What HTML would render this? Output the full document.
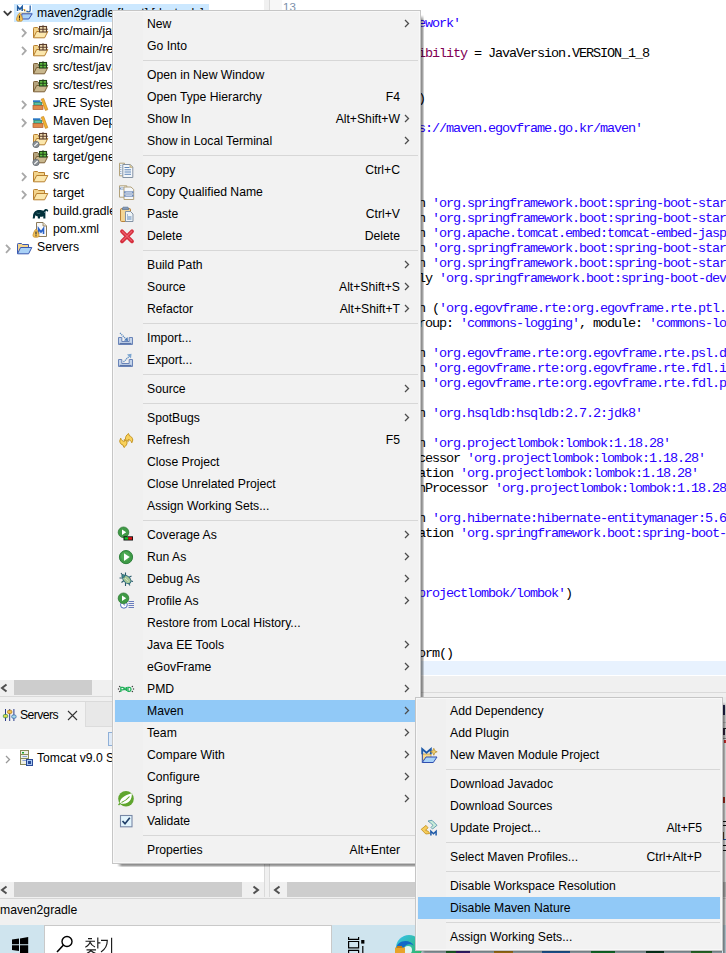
<!DOCTYPE html><html><head><meta charset="utf-8"><style>
*{margin:0;padding:0;box-sizing:content-box}
html,body{width:726px;height:953px;overflow:hidden;background:#fff;position:relative}
.ab{position:absolute}
.t{font-family:"Liberation Sans", sans-serif;font-size:12.2px;color:#000;white-space:nowrap}
.c{font-family:"Liberation Mono",monospace;font-size:13.5px;letter-spacing:-1.1px;white-space:pre;color:#000;line-height:15px}
.s{color:#2a00ff}
.k{color:#7f0055}
</style></head><body>
<div class="ab" style="left:264px;top:0;width:5px;height:697px;background:#f0f0f0"></div>
<div class="ab" style="left:269px;top:0;width:1px;height:692px;background:#dadada"></div>
<div class="ab" style="left:270px;top:0;width:12px;height:692px;background:#f7f7f7"></div>
<div class="ab t" style="left:283px;top:-4px;height:22px;line-height:22px;color:#7a8ea8;font-size:11.5px">13</div>
<div class="ab" style="left:14px;top:4px;width:195px;height:18px;background:#cce8ff"></div>
<svg class="ab" style="left:2px;top:9px" width="11" height="9" viewBox="0 0 11 9"><path d="M1.8 2.2 L5.6 6 L9.4 2.2" fill="none" stroke="#3c3c3c" stroke-width="1.8"/></svg>
<div class="ab" style="left:16px;top:5px;line-height:0"><svg width="17" height="17" viewBox="0 0 17 17"><rect x="0.5" y="0" width="15.5" height="7" fill="#fff"/><path d="M1.6 6V1.5L3.9 4.3L6.2 1.5V6" fill="none" stroke="#1f5a9e" stroke-width="1.5"/><path d="M7.5 4.5h1.5v2" stroke="#d9a83a" stroke-width="1"/><path d="M14.2 0.5V5.2Q14.2 7 12.5 7Q11 7 10.6 5.8" fill="none" stroke="#2a62a8" stroke-width="1.3"/><path d="M3 7.5H14V9H3z" fill="#f6dc98"/><path d="M5.8 8.8H16.2L12.8 14H5.8Z" fill="#a9d1f6" stroke="#3a52b0" stroke-width="1" stroke-linejoin="round"/><path d="M3.5 8.3C2.5 8.3 0.5 12.8 0.5 14.5C0.5 16 1.5 16.2 3.5 16.2C5.5 16.2 6.5 16 6.5 14.5C6.5 12.8 4.5 8.3 3.5 8.3Z" fill="#f6c558" stroke="#c68a2a" stroke-width="0.8"/><path d="M3.5 10.6V13.4M3.5 14.2V15.2" stroke="#2a2a2a" stroke-width="1.1"/></svg></div>
<div class="ab t" style="left:37px;top:2px;height:22px;line-height:22px">maven2gradle [boot] [devtools]</div>
<svg class="ab" style="left:20px;top:27px" width="9" height="12" viewBox="0 0 9 12"><path d="M2 1.8 L5.8 5.8 L2 9.8" fill="none" stroke="#a8a8a8" stroke-width="1.8"/></svg>
<div class="ab" style="left:32px;top:23px;line-height:0"><svg width="17" height="17" viewBox="0 0 17 17"><g transform="translate(0,1)"><path d="M1.5 13.5V4.3Q1.5 3.5 2.3 3.5H5.5L6.5 4.5H12.5V7.5" fill="#f3d48c" stroke="#b8802f" stroke-width="1"/><path d="M1.5 13.8L4.6 7.5H15.8L12.6 13.8Z" fill="#fbe7ad" stroke="#b8802f" stroke-width="1" stroke-linejoin="round"/><rect x="7.5" y="2.5" width="7" height="5.5" fill="#f6e2b4" stroke="#5c3e2c" stroke-width="1.1"/><path d="M11 1.2V8M6.5 5.2H15.8" stroke="#5c3e2c" stroke-width="1.1"/></g></svg></div>
<div class="ab t" style="left:53px;top:20px;height:22px;line-height:22px">src/main/java</div>
<svg class="ab" style="left:20px;top:45px" width="9" height="12" viewBox="0 0 9 12"><path d="M2 1.8 L5.8 5.8 L2 9.8" fill="none" stroke="#a8a8a8" stroke-width="1.8"/></svg>
<div class="ab" style="left:32px;top:41px;line-height:0"><svg width="17" height="17" viewBox="0 0 17 17"><g transform="translate(0,1)"><path d="M1.5 13.5V4.3Q1.5 3.5 2.3 3.5H5.5L6.5 4.5H12.5V7.5" fill="#f3d48c" stroke="#b8802f" stroke-width="1"/><path d="M1.5 13.8L4.6 7.5H15.8L12.6 13.8Z" fill="#fbe7ad" stroke="#b8802f" stroke-width="1" stroke-linejoin="round"/><rect x="7.5" y="2.5" width="7" height="5.5" fill="#f6e2b4" stroke="#5c3e2c" stroke-width="1.1"/><path d="M11 1.2V8M6.5 5.2H15.8" stroke="#5c3e2c" stroke-width="1.1"/></g></svg></div>
<div class="ab t" style="left:53px;top:38px;height:22px;line-height:22px">src/main/resources</div>
<div class="ab" style="left:32px;top:59px;line-height:0"><svg width="17" height="17" viewBox="0 0 17 17"><g transform="translate(0,1)"><path d="M1.5 13.5V4.3Q1.5 3.5 2.3 3.5H5.5L6.5 4.5H12.5V7.5" fill="#b5a47e" stroke="#7c6038" stroke-width="1"/><path d="M1.5 13.8L4.6 7.5H15.8L12.6 13.8Z" fill="#c9b88e" stroke="#7c6038" stroke-width="1" stroke-linejoin="round"/><rect x="7.5" y="2.5" width="7" height="5.5" fill="#62c043" stroke="#21421a" stroke-width="1.1"/><path d="M11 1.2V8M6.5 5.2H15.8" stroke="#21421a" stroke-width="1.1"/></g></svg></div>
<div class="ab t" style="left:53px;top:56px;height:22px;line-height:22px">src/test/java</div>
<div class="ab" style="left:32px;top:77px;line-height:0"><svg width="17" height="17" viewBox="0 0 17 17"><g transform="translate(0,1)"><path d="M1.5 13.5V4.3Q1.5 3.5 2.3 3.5H5.5L6.5 4.5H12.5V7.5" fill="#b5a47e" stroke="#7c6038" stroke-width="1"/><path d="M1.5 13.8L4.6 7.5H15.8L12.6 13.8Z" fill="#c9b88e" stroke="#7c6038" stroke-width="1" stroke-linejoin="round"/><rect x="7.5" y="2.5" width="7" height="5.5" fill="#62c043" stroke="#21421a" stroke-width="1.1"/><path d="M11 1.2V8M6.5 5.2H15.8" stroke="#21421a" stroke-width="1.1"/></g></svg></div>
<div class="ab t" style="left:53px;top:74px;height:22px;line-height:22px">src/test/resources</div>
<svg class="ab" style="left:20px;top:99px" width="9" height="12" viewBox="0 0 9 12"><path d="M2 1.8 L5.8 5.8 L2 9.8" fill="none" stroke="#a8a8a8" stroke-width="1.8"/></svg>
<div class="ab" style="left:32px;top:95px;line-height:0"><svg width="17" height="17" viewBox="0 0 17 17"><rect x="1" y="5.3" width="7.5" height="1.8" fill="#2b78c2"/><rect x="1.8" y="7.3" width="8" height="3" fill="#3aa98a" stroke="#2a7a62" stroke-width="0.6"/><path d="M3 8.8h5.5" stroke="#8fd8c0" stroke-width="0.7"/><rect x="1" y="10.5" width="10" height="4" fill="#e0894a" stroke="#b05a2a" stroke-width="0.7"/><path d="M9.2 4.2L11.6 3.4L15.8 14.6L13.4 15.4Z" fill="#f2b431" stroke="#c68220" stroke-width="0.7"/></svg></div>
<div class="ab t" style="left:53px;top:92px;height:22px;line-height:22px">JRE System Library [JavaSE-1.8]</div>
<svg class="ab" style="left:20px;top:117px" width="9" height="12" viewBox="0 0 9 12"><path d="M2 1.8 L5.8 5.8 L2 9.8" fill="none" stroke="#a8a8a8" stroke-width="1.8"/></svg>
<div class="ab" style="left:32px;top:113px;line-height:0"><svg width="17" height="17" viewBox="0 0 17 17"><rect x="1" y="5.3" width="7.5" height="1.8" fill="#2b78c2"/><rect x="1.8" y="7.3" width="8" height="3" fill="#3aa98a" stroke="#2a7a62" stroke-width="0.6"/><path d="M3 8.8h5.5" stroke="#8fd8c0" stroke-width="0.7"/><rect x="1" y="10.5" width="10" height="4" fill="#e0894a" stroke="#b05a2a" stroke-width="0.7"/><path d="M9.2 4.2L11.6 3.4L15.8 14.6L13.4 15.4Z" fill="#f2b431" stroke="#c68220" stroke-width="0.7"/></svg></div>
<div class="ab t" style="left:53px;top:110px;height:22px;line-height:22px">Maven Dependencies</div>
<div class="ab" style="left:32px;top:131px;line-height:0"><svg width="17" height="17" viewBox="0 0 17 17"><g transform="translate(0,0)"><path d="M1.5 13.5V4.3Q1.5 3.5 2.3 3.5H5.5L6.5 4.5H12.5V7.5" fill="#f3d48c" stroke="#b8802f" stroke-width="1"/><path d="M1.5 13.8L4.6 7.5H15.8L12.6 13.8Z" fill="#fbe7ad" stroke="#b8802f" stroke-width="1" stroke-linejoin="round"/><rect x="7.5" y="2.5" width="7" height="5.5" fill="#f6e2b4" stroke="#5c3e2c" stroke-width="1.1"/><path d="M11 1.2V8M6.5 5.2H15.8" stroke="#5c3e2c" stroke-width="1.1"/></g><circle cx="4" cy="13.5" r="3.2" fill="#8a9096" stroke="#6a7076" stroke-width="0.8"/><path d="M2.3 15.2L5.7 11.8" stroke="#fff" stroke-width="1.1"/></svg></div>
<div class="ab t" style="left:53px;top:128px;height:22px;line-height:22px">target/generated-sources/annotations</div>
<div class="ab" style="left:32px;top:149px;line-height:0"><svg width="17" height="17" viewBox="0 0 17 17"><g transform="translate(0,0)"><path d="M1.5 13.5V4.3Q1.5 3.5 2.3 3.5H5.5L6.5 4.5H12.5V7.5" fill="#b5a47e" stroke="#7c6038" stroke-width="1"/><path d="M1.5 13.8L4.6 7.5H15.8L12.6 13.8Z" fill="#c9b88e" stroke="#7c6038" stroke-width="1" stroke-linejoin="round"/><rect x="7.5" y="2.5" width="7" height="5.5" fill="#62c043" stroke="#21421a" stroke-width="1.1"/><path d="M11 1.2V8M6.5 5.2H15.8" stroke="#21421a" stroke-width="1.1"/></g><circle cx="4" cy="13.5" r="3.2" fill="#8a9096" stroke="#6a7076" stroke-width="0.8"/><path d="M2.3 15.2L5.7 11.8" stroke="#fff" stroke-width="1.1"/></svg></div>
<div class="ab t" style="left:53px;top:146px;height:22px;line-height:22px">target/generated-test-sources/test-annotations</div>
<svg class="ab" style="left:20px;top:171px" width="9" height="12" viewBox="0 0 9 12"><path d="M2 1.8 L5.8 5.8 L2 9.8" fill="none" stroke="#a8a8a8" stroke-width="1.8"/></svg>
<div class="ab" style="left:32px;top:167px;line-height:0"><svg width="17" height="17" viewBox="0 0 17 17"><g transform="translate(0,1)"><path d="M1.5 13.5V4.3Q1.5 3.5 2.3 3.5H5.5L6.5 4.5H12.5V7.5" fill="#f3d48c" stroke="#b8802f" stroke-width="1"/><path d="M1.5 13.8L4.6 7.5H15.8L12.6 13.8Z" fill="#fbe7ad" stroke="#b8802f" stroke-width="1" stroke-linejoin="round"/></g></svg></div>
<div class="ab t" style="left:53px;top:164px;height:22px;line-height:22px">src</div>
<svg class="ab" style="left:20px;top:189px" width="9" height="12" viewBox="0 0 9 12"><path d="M2 1.8 L5.8 5.8 L2 9.8" fill="none" stroke="#a8a8a8" stroke-width="1.8"/></svg>
<div class="ab" style="left:32px;top:185px;line-height:0"><svg width="17" height="17" viewBox="0 0 17 17"><g transform="translate(0,1)"><path d="M1.5 13.5V4.3Q1.5 3.5 2.3 3.5H5.5L6.5 4.5H12.5V7.5" fill="#f3d48c" stroke="#b8802f" stroke-width="1"/><path d="M1.5 13.8L4.6 7.5H15.8L12.6 13.8Z" fill="#fbe7ad" stroke="#b8802f" stroke-width="1" stroke-linejoin="round"/></g></svg></div>
<div class="ab t" style="left:53px;top:182px;height:22px;line-height:22px">target</div>
<div class="ab" style="left:32px;top:203px;line-height:0"><svg width="17" height="17" viewBox="0 0 17 17"><path d="M1 13.5C1 9.5 3.5 7 7 7C9 7 10.5 7.3 11.5 7.8C12.5 6 14.5 5.5 15.8 6.8C16.5 7.5 16.2 8.8 15.3 8.6C14.8 8.5 14.8 7.8 14.2 7.8C13.5 7.9 13.4 9 13.4 10.5V15.5H11.3V13.2C10.4 13.6 9.3 13.8 8 13.7V15.5H5.8V13.4C4.8 13.2 4 12.8 3.4 12.3L2.7 15.5H0.7Z" fill="#02303a"/><path d="M4.5 9.8Q6 11 8.2 10.2" fill="none" stroke="#5a8a92" stroke-width="0.6"/><circle cx="12.6" cy="9.3" r="0.5" fill="#8ab"/></svg></div>
<div class="ab t" style="left:53px;top:200px;height:22px;line-height:22px">build.gradle</div>
<div class="ab" style="left:32px;top:221px;line-height:0"><svg width="17" height="17" viewBox="0 0 17 17"><path d="M4.5 1.5H11L14.5 5V15.5H4.5Z" fill="#f8f8f8" stroke="#8a7a5a" stroke-width="1"/><path d="M11 1.5V5H14.5" fill="#e8e0c8" stroke="#8a7a5a" stroke-width="0.8"/><path d="M6.5 13V7.5L9 11L11.5 7.5V13" fill="none" stroke="#2a62c8" stroke-width="1.6"/><g transform="translate(0.5,0)"><path d="M3.5 8.3C2.5 8.3 0.5 12.8 0.5 14.5C0.5 16 1.5 16.2 3.5 16.2C5.5 16.2 6.5 16 6.5 14.5C6.5 12.8 4.5 8.3 3.5 8.3Z" fill="#f6c558" stroke="#c68a2a" stroke-width="0.8"/><path d="M3.5 10.6V13.4M3.5 14.2V15.2" stroke="#2a2a2a" stroke-width="1.1"/></g></svg></div>
<div class="ab t" style="left:53px;top:218px;height:22px;line-height:22px">pom.xml</div>
<svg class="ab" style="left:4px;top:243px" width="9" height="12" viewBox="0 0 9 12"><path d="M2 1.8 L5.8 5.8 L2 9.8" fill="none" stroke="#a8a8a8" stroke-width="1.8"/></svg>
<div class="ab" style="left:16px;top:239px;line-height:0"><svg width="17" height="17" viewBox="0 0 17 17"><g transform="translate(0,1)"><path d="M1.5 13.5V4.3Q1.5 3.5 2.3 3.5H5.5L6.5 4.5H12.5V7.5" fill="#f3d48c" stroke="#3a58b0" stroke-width="1"/><path d="M1.5 13.8L4.6 7.5H15.8L12.6 13.8Z" fill="#a9d1f6" stroke="#3a58b0" stroke-width="1" stroke-linejoin="round"/></g></svg></div>
<div class="ab t" style="left:37px;top:236px;height:22px;line-height:22px">Servers</div>
<div class="ab" style="left:0;top:680px;width:264px;height:15px;background:#f0f0f0"></div>
<svg class="ab" style="left:0px;top:683px" width="9" height="10" viewBox="0 0 9 10"><path d="M6.5 1.5 L2 5 L6.5 8.5" fill="none" stroke="#505050" stroke-width="2"/></svg>
<div class="ab" style="left:14px;top:680px;width:78px;height:15px;background:#cdcdcd"></div>
<div class="ab" style="left:0;top:695px;width:264px;height:6px;background:#f0f0f0"></div>
<div class="ab" style="left:0;top:696px;width:264px;height:1px;background:#dadada"></div>
<div class="ab" style="left:0;top:701px;width:264px;height:1px;background:#dadada"></div>
<div class="ab" style="left:0;top:702px;width:85px;height:25px;background:#f2f2f2"></div>
<div class="ab" style="left:85px;top:702px;width:178px;height:24px;background:#e8e8e8;border-left:1px solid #dcdcdc;border-bottom:1px solid #dcdcdc"></div>
<div class="ab" style="left:0;top:727px;width:264px;height:22px;background:#f2f2f2"></div>
<svg class="ab" style="left:2px;top:708px" width="16" height="14" viewBox="0 0 16 14"><path d="M3.5 1v12M7.7 1v12M11.9 1v12" stroke="#2a3a8a" stroke-width="1"/><rect x="1.3" y="6.5" width="4.4" height="3.2" rx="1.3" fill="#d8d84a" stroke="#3a8a4a" stroke-width="0.8"/><rect x="5.5" y="2.3" width="4.4" height="3.2" rx="1.3" fill="#f2c04a" stroke="#b07a1a" stroke-width="0.8"/><rect x="9.7" y="7" width="4.4" height="3.2" rx="1.3" fill="#a8dcea" stroke="#3a6aa8" stroke-width="0.8"/></svg>
<div class="ab t" style="left:20px;top:704px;height:22px;line-height:22px;letter-spacing:-0.55px">Servers</div>
<svg class="ab" style="left:67px;top:710px" width="11" height="11" viewBox="0 0 11 11"><path d="M1 1L10 10M10 1L1 10" stroke="#333" stroke-width="1.1"/></svg>
<div class="ab" style="left:108px;top:732px;width:6px;height:12px;border:1px solid #8fb0d8;background:#dfeaf7"></div>
<div class="ab" style="left:0;top:749px;width:264px;height:133px;background:#fff"></div>
<svg class="ab" style="left:5px;top:755px" width="6" height="9" viewBox="0 0 6 9"><path d="M1 1 L4.5 4.5 L1 8" fill="none" stroke="#999" stroke-width="1.3"/></svg>
<svg class="ab" style="left:19px;top:749px" width="15" height="18" viewBox="0 0 15 18"><rect x="1.5" y="1.5" width="8" height="14" fill="#eef0e4" stroke="#8a8a5a"/><path d="M2 5.5h7M2 9.5h7" stroke="#8a8a5a"/><rect x="3" y="3" width="2" height="1.5" fill="#1aa02a"/><path d="M3.5 7.5h4.5M3.5 11.5h4.5" stroke="#8aa0d8"/><rect x="7.5" y="10.5" width="6" height="6" fill="#a8c8f0" stroke="#2a4a98"/><rect x="9" y="12" width="3" height="3" fill="#2a4a98"/></svg>
<div class="ab t" style="left:37px;top:747px;height:22px;line-height:22px">Tomcat v9.0 Server at localhost</div>
<div class="ab" style="left:0;top:882px;width:264px;height:15px;background:#f0f0f0"></div>
<svg class="ab" style="left:0px;top:885px" width="9" height="10" viewBox="0 0 9 10"><path d="M6.5 1.5 L2 5 L6.5 8.5" fill="none" stroke="#505050" stroke-width="2"/></svg>
<div class="ab" style="left:14px;top:882px;width:228px;height:15px;background:#cdcdcd"></div>
<svg class="ab" style="left:252px;top:885px" width="9" height="10" viewBox="0 0 9 10"><path d="M1.5 1.5 L6 5 L1.5 8.5" fill="none" stroke="#505050" stroke-width="2"/></svg>
<div class="ab" style="left:264px;top:697px;width:5px;height:200px;background:#f0f0f0"></div>
<div class="ab" style="left:264px;top:697px;width:1px;height:200px;background:#dadada"></div>
<div class="ab" style="left:269px;top:697px;width:1px;height:200px;background:#dadada"></div>
<div class="ab" style="left:270px;top:882px;width:456px;height:15px;background:#f0f0f0"></div>
<svg class="ab" style="left:273px;top:885px" width="9" height="10" viewBox="0 0 9 10"><path d="M6.5 1.5 L2 5 L6.5 8.5" fill="none" stroke="#505050" stroke-width="2"/></svg>
<div class="ab" style="left:287px;top:882px;width:439px;height:15px;background:#cdcdcd"></div>
<div class="ab" style="left:0;top:897px;width:726px;height:28px;background:#f0f0f0"></div>
<div class="ab" style="left:0;top:898px;width:726px;height:1px;background:#d5d5d5"></div>
<div class="ab t" style="left:0px;top:899px;height:22px;line-height:22px">maven2gradle</div>
<div class="ab" style="left:0;top:925px;width:726px;height:28px;background:#cfe4ee"></div>
<div class="ab" style="left:44px;top:925px;width:287px;height:28px;background:#c9c9c9"></div>
<div class="ab" style="left:45px;top:926px;width:286px;height:27px;background:#fff"></div>
<div class="ab" style="left:331px;top:925px;width:1px;height:28px;background:#c9c9c9"></div>
<svg class="ab" style="left:0;top:925px" width="44" height="28" viewBox="0 925 44 28"><path d="M12 939.6L19 938.6V944.3H12z M20 938.4L28.2 937V944.3H20z M12 945.3H19V951L12 950z M20 945.3H28.2V953H20z" fill="#000"/></svg>
<svg class="ab" style="left:56px;top:935px" width="18" height="18" viewBox="0 0 18 18"><circle cx="11" cy="6.5" r="5" fill="none" stroke="#000" stroke-width="1.4"/><path d="M7.5 10L1 17" stroke="#000" stroke-width="1.6"/></svg>
<svg class="ab" style="left:84px;top:936px" width="30" height="17" viewBox="0 0 30 17" fill="none" stroke="#1a1a1a" stroke-width="1.15"><path d="M4 2.6h4M1.5 5.2h9.5M6.3 5.2C5.8 8 4 10 1.3 11.3M6.3 6.5C7 8.5 8.8 10 11 11M13.8 1.5v11M13.8 6.8h2.6M2.5 13.8h9.5M7.3 13.8C6.5 15.5 5 16.5 3 17.2M7.3 14.8C8.3 16 9.8 16.8 11.5 17.2"/><path d="M17 4.3h6.3C23.3 10 21 13.5 17 16M27.6 1.8v15.2"/></svg>
<svg class="ab" style="left:340px;top:925px" width="30" height="28" viewBox="340 925 30 28" fill="none" stroke="#000" stroke-width="1.2"><path d="M348.6 937v2.4h10v-2.4M348.6 941.5h10v6.3h-10zM348.6 953v-2.6h10V953M362.8 946v7"/><rect x="361.2" y="940" width="3.2" height="3.6" fill="#000" stroke="none"/></svg>
<svg class="ab" style="left:390px;top:925px" width="36" height="28" viewBox="390 925 36 28"><defs><linearGradient id="eg" x1="0" y1="0" x2="1" y2="1"><stop offset="0" stop-color="#35c1f1"/><stop offset="1" stop-color="#2fb64f"/></linearGradient></defs><circle cx="409" cy="948" r="13" fill="url(#eg)"/><path d="M396 950C396 940 410 938 414 946C411 943 404 944 403 950C403 954 407 956 412 955L396 955z" fill="#1469c7"/><circle cx="408" cy="950" r="4" fill="#fff" opacity="0.85"/><rect x="395" y="947.5" width="10" height="5.5" fill="#e8a32a"/><rect x="397" y="946" width="5" height="2" fill="#c47d14"/></svg>
<div class="ab" style="left:296px;top:661px;width:430px;height:14px;background:#e8f2fe"></div>
<div class="ab" style="left:270px;top:676px;width:456px;height:16px;background:#f0f0f0"></div>
<div class="ab" style="left:270px;top:692px;width:456px;height:1px;background:#dadada"></div>
<div class="ab" style="left:270px;top:693px;width:456px;height:4px;background:#f0f0f0"></div>
<div class="ab c" style="left:418px;top:16.0px"><span class="s">ework'</span></div>
<div class="ab c" style="left:418px;top:46.0px"><span class="k">ibility</span> = JavaVersion.VERSION_1_8</div>
<div class="ab c" style="left:418px;top:91.0px">)</div>
<div class="ab c" style="left:418px;top:121.0px"><span class="s">s://maven.egovframe.go.kr/maven'</span></div>
<div class="ab c" style="left:418px;top:196.0px">n <span class="s">'org.springframework.boot:spring-boot-starter-data-jpa'</span></div>
<div class="ab c" style="left:418px;top:211.0px">n <span class="s">'org.springframework.boot:spring-boot-starter-web'</span></div>
<div class="ab c" style="left:418px;top:226.0px">n <span class="s">'org.apache.tomcat.embed:tomcat-embed-jasper'</span></div>
<div class="ab c" style="left:418px;top:241.0px">n <span class="s">'org.springframework.boot:spring-boot-starter-thymeleaf'</span></div>
<div class="ab c" style="left:418px;top:256.0px">n <span class="s">'org.springframework.boot:spring-boot-starter-validation'</span></div>
<div class="ab c" style="left:418px;top:271.0px">ly <span class="s">'org.springframework.boot:spring-boot-devtools'</span></div>
<div class="ab c" style="left:418px;top:301.0px">n (<span class="s">'org.egovframe.rte:org.egovframe.rte.ptl.mvc:4.1.0'</span>)</div>
<div class="ab c" style="left:418px;top:316.0px">roup: <span class="s">'commons-logging'</span>, module: <span class="s">'commons-logging'</span></div>
<div class="ab c" style="left:418px;top:346.0px">n <span class="s">'org.egovframe.rte:org.egovframe.rte.psl.dataaccess:4.1.0'</span></div>
<div class="ab c" style="left:418px;top:361.0px">n <span class="s">'org.egovframe.rte:org.egovframe.rte.fdl.idgnr:4.1.0'</span></div>
<div class="ab c" style="left:418px;top:376.0px">n <span class="s">'org.egovframe.rte:org.egovframe.rte.fdl.property:4.1.0'</span></div>
<div class="ab c" style="left:418px;top:406.0px">n <span class="s">'org.hsqldb:hsqldb:2.7.2:jdk8'</span></div>
<div class="ab c" style="left:418px;top:436.0px">n <span class="s">'org.projectlombok:lombok:1.18.28'</span></div>
<div class="ab c" style="left:418px;top:451.0px">cessor <span class="s">'org.projectlombok:lombok:1.18.28'</span></div>
<div class="ab c" style="left:418px;top:466.0px">ation <span class="s">'org.projectlombok:lombok:1.18.28'</span></div>
<div class="ab c" style="left:418px;top:481.0px">nProcessor <span class="s">'org.projectlombok:lombok:1.18.28'</span></div>
<div class="ab c" style="left:418px;top:511.0px">n <span class="s">'org.hibernate:hibernate-entitymanager:5.6.15.Final'</span></div>
<div class="ab c" style="left:418px;top:526.0px">ation <span class="s">'org.springframework.boot:spring-boot-starter-test'</span></div>
<div class="ab c" style="left:418px;top:586.0px"><span class="s">projectlombok/lombok'</span>)</div>
<div class="ab c" style="left:418px;top:646.0px">orm()</div>
<div class="ab" style="left:723px;top:697px;width:3px;height:41px;background:#ececec"></div>
<div class="ab" style="left:723px;top:705px;width:2px;height:10px;background:#2a2a5a"></div>
<div class="ab" style="left:723px;top:722px;width:3px;height:1px;background:#c8c8c8"></div>
<div class="ab" style="left:723px;top:728px;width:2px;height:7px;background:#3a2a4a"></div>
<div class="ab" style="left:724px;top:728px;width:2px;height:1px;background:#222"></div>
<div class="ab" style="left:723px;top:738px;width:3px;height:1px;background:#999"></div>
<div class="ab" style="left:724px;top:740px;width:2px;height:3px;background:#e03030"></div>
<div class="ab" style="left:723px;top:797px;width:2px;height:6px;background:#c03020"></div>
<div class="ab" style="left:723px;top:821px;width:3px;height:1px;background:#111"></div>
<div class="ab" style="left:723px;top:825px;width:3px;height:1px;background:#111"></div>
<div class="ab" style="left:723px;top:832px;width:1px;height:8px;background:#6a4a2a"></div>
<div class="ab" style="left:723px;top:839px;width:3px;height:1px;background:#2a5ab0"></div>
<div class="ab" style="left:723px;top:845px;width:3px;height:1px;background:#111"></div>
<div class="ab" style="left:723px;top:850px;width:3px;height:1px;background:#111"></div>
<div class="ab" style="left:446px;top:951px;width:10px;height:2px;background:#2a8a3a"></div>
<div class="ab" style="left:456px;top:951px;width:14px;height:2px;background:#4a2a9a"></div>
<div class="ab" style="left:494px;top:951px;width:19px;height:2px;background:#e0a020"></div>
<div class="ab" style="left:542px;top:951px;width:28px;height:2px;background:#2a7ad0"></div>
<div class="ab" style="left:591px;top:951px;width:24px;height:2px;background:#1a9a3a"></div>
<div class="ab" style="left:646px;top:951px;width:18px;height:2px;background:#0a4a2a"></div>
<div class="ab" style="left:691px;top:951px;width:21px;height:2px;background:#3a9a3a"></div>
<div class="ab" style="left:421px;top:15px;width:3px;height:852px;background:linear-gradient(to right,rgba(0,0,0,.48),rgba(0,0,0,.36) 50%,rgba(0,0,0,.1));-webkit-mask-image:linear-gradient(to bottom,transparent,#000 5px)"></div>
<div class="ab" style="left:117px;top:864px;width:303px;height:3px;background:linear-gradient(to bottom,rgba(0,0,0,.48),rgba(0,0,0,.36) 50%,rgba(0,0,0,.1));-webkit-mask-image:linear-gradient(to right,transparent,#000 5px)"></div>
<div class="ab" style="left:112px;top:10px;width:307px;height:852px;background:#f2f2f2;border:1px solid #c6c6c6"></div>
<div class="ab" style="left:113px;top:11px;width:305px;height:850px;border:1px solid #f8f8f8"></div>
<div class="ab" style="left:114px;top:12px;width:29px;height:850px;background:#f0f0f0"></div>
<div class="ab t" style="left:147px;top:13px;height:22px;line-height:22px">New</div>
<svg class="ab" style="left:404px;top:19px" width="6" height="9" viewBox="0 0 6 9"><path d="M1 1 L4.5 4.5 L1 8" fill="none" stroke="#4d4d4d" stroke-width="1.3"/></svg>
<div class="ab t" style="left:147px;top:35px;height:22px;line-height:22px">Go Into</div>
<div class="ab" style="left:143px;top:60px;width:275px;height:1px;background:#d7d7d7"></div>
<div class="ab t" style="left:147px;top:64px;height:22px;line-height:22px">Open in New Window</div>
<div class="ab t" style="left:147px;top:86px;height:22px;line-height:22px">Open Type Hierarchy</div>
<div class="ab t" style="right:326px;top:86px;height:22px;line-height:22px">F4</div>
<div class="ab t" style="left:147px;top:108px;height:22px;line-height:22px">Show In</div>
<div class="ab t" style="right:326px;top:108px;height:22px;line-height:22px">Alt+Shift+W</div>
<svg class="ab" style="left:404px;top:114px" width="6" height="9" viewBox="0 0 6 9"><path d="M1 1 L4.5 4.5 L1 8" fill="none" stroke="#4d4d4d" stroke-width="1.3"/></svg>
<div class="ab t" style="left:147px;top:130px;height:22px;line-height:22px">Show in Local Terminal</div>
<svg class="ab" style="left:404px;top:136px" width="6" height="9" viewBox="0 0 6 9"><path d="M1 1 L4.5 4.5 L1 8" fill="none" stroke="#4d4d4d" stroke-width="1.3"/></svg>
<div class="ab" style="left:143px;top:155px;width:275px;height:1px;background:#d7d7d7"></div>
<div class="ab t" style="left:147px;top:159px;height:22px;line-height:22px">Copy</div>
<div class="ab t" style="right:326px;top:159px;height:22px;line-height:22px">Ctrl+C</div>
<div class="ab" style="left:117px;top:161px;line-height:0"><svg width="20" height="20" viewBox="0 0 20 20"><path d="M2.5 2.2H7.5V14.8H2.5Z" fill="#eef2f6" stroke="#b3a27a"/><path d="M3.8 4v10" stroke="#7f9cc0" stroke-dasharray="1 1"/><path d="M5.8 3.5H13.3L15.8 6V16.5H5.8Z" fill="#f4f7fa" stroke="#8392a4"/><path d="M13 3.5V6.3H15.8" fill="#e6d2a0" stroke="#b3a27a" stroke-width="0.8"/><path d="M7.5 6.5H12.5M7.5 8.8H14M7.5 11H14M7.5 13.3H14" stroke="#5f86b8" stroke-width="1"/></svg></div>
<div class="ab t" style="left:147px;top:181px;height:22px;line-height:22px">Copy Qualified Name</div>
<div class="ab" style="left:117px;top:183px;line-height:0"><svg width="20" height="20" viewBox="0 0 20 20"><path d="M2.5 2.8H9.8V14.2H2.5Z" fill="#f4f7fa" stroke="#b3a27a"/><path d="M2.5 4.5H9.8V6.5H2.5Z" fill="#7a96c0"/><path d="M4 5.5H8" stroke="#dfe8f4" stroke-width="0.8"/><path d="M7 4H14L16.7 6.5V16.5H7Z" fill="#f4f7fa" stroke="#b3a27a"/><path d="M7 8.2H16.7V10.5H7ZM7 11.5H16.7V13.8H7Z" fill="#6f8cba"/><path d="M8.5 9.3H15M8.5 12.6H15" stroke="#dfe8f4" stroke-width="0.8"/></svg></div>
<div class="ab t" style="left:147px;top:203px;height:22px;line-height:22px">Paste</div>
<div class="ab t" style="right:326px;top:203px;height:22px;line-height:22px">Ctrl+V</div>
<div class="ab" style="left:117px;top:205px;line-height:0"><svg width="20" height="20" viewBox="0 0 20 20"><rect x="3.5" y="3.5" width="10" height="13" rx="1.2" fill="#f3d595" stroke="#b8823a"/><path d="M6 2.2H11L11.8 4.5H5.2Z" fill="#8298b8" stroke="#627898" stroke-width="0.8"/><path d="M8.5 6.5H13.5L16 9V16.5H8.5Z" fill="#eef4f8" stroke="#8392a4"/><path d="M10 10H11M10 12H14.5M10 14H14.5" stroke="#5f86b8"/></svg></div>
<div class="ab t" style="left:147px;top:225px;height:22px;line-height:22px">Delete</div>
<div class="ab t" style="right:326px;top:225px;height:22px;line-height:22px">Delete</div>
<div class="ab" style="left:117px;top:227px;line-height:0"><svg width="20" height="20" viewBox="0 0 20 20"><path d="M5 4.3L15 14.3M15 4.3L5 14.3" stroke="#d52d3c" stroke-width="3.8" stroke-linecap="round"/><path d="M5.3 4.5L14.5 13.7M14.7 4.5L5.5 13.7" stroke="#f06a78" stroke-width="1.2" stroke-linecap="round" opacity="0.8"/></svg></div>
<div class="ab" style="left:143px;top:250px;width:275px;height:1px;background:#d7d7d7"></div>
<div class="ab t" style="left:147px;top:254px;height:22px;line-height:22px">Build Path</div>
<svg class="ab" style="left:404px;top:260px" width="6" height="9" viewBox="0 0 6 9"><path d="M1 1 L4.5 4.5 L1 8" fill="none" stroke="#4d4d4d" stroke-width="1.3"/></svg>
<div class="ab t" style="left:147px;top:276px;height:22px;line-height:22px">Source</div>
<div class="ab t" style="right:326px;top:276px;height:22px;line-height:22px">Alt+Shift+S</div>
<svg class="ab" style="left:404px;top:282px" width="6" height="9" viewBox="0 0 6 9"><path d="M1 1 L4.5 4.5 L1 8" fill="none" stroke="#4d4d4d" stroke-width="1.3"/></svg>
<div class="ab t" style="left:147px;top:298px;height:22px;line-height:22px">Refactor</div>
<div class="ab t" style="right:326px;top:298px;height:22px;line-height:22px">Alt+Shift+T</div>
<svg class="ab" style="left:404px;top:304px" width="6" height="9" viewBox="0 0 6 9"><path d="M1 1 L4.5 4.5 L1 8" fill="none" stroke="#4d4d4d" stroke-width="1.3"/></svg>
<div class="ab" style="left:143px;top:323px;width:275px;height:1px;background:#d7d7d7"></div>
<div class="ab t" style="left:147px;top:327px;height:22px;line-height:22px">Import...</div>
<div class="ab" style="left:117px;top:329px;line-height:0"><svg width="20" height="20" viewBox="0 0 20 20"><path d="M1.5 8.5H4.8V12.5H12.2V8.5H15.5V15.5H1.5Z" fill="#c4d4ea" stroke="#6a84b8"/><path d="M2.5 14.5H14.5" stroke="#5a74a8" stroke-width="1.2"/><path d="M3 4L9.5 10.5" stroke="#5a8ac0" stroke-width="1.3" stroke-dasharray="1.2 0.8"/><path d="M11 12L10.5 8L7 11.5Z" fill="#4a7ab8"/></svg></div>
<div class="ab t" style="left:147px;top:349px;height:22px;line-height:22px">Export...</div>
<div class="ab" style="left:117px;top:351px;line-height:0"><svg width="20" height="20" viewBox="0 0 20 20"><path d="M1.5 8.5H4.8V12.5H12.2V8.5H15.5V15.5H1.5Z" fill="#c4d4ea" stroke="#6a84b8"/><path d="M2.5 14.5H14.5" stroke="#5a74a8" stroke-width="1.2"/><path d="M6.5 11L12.5 5" stroke="#5a8ac0" stroke-width="1.3" stroke-dasharray="1.2 0.8"/><path d="M14.5 2.8L10 3.5L14 7.5Z" fill="#7aa4d0"/></svg></div>
<div class="ab" style="left:143px;top:374px;width:275px;height:1px;background:#d7d7d7"></div>
<div class="ab t" style="left:147px;top:378px;height:22px;line-height:22px">Source</div>
<svg class="ab" style="left:404px;top:384px" width="6" height="9" viewBox="0 0 6 9"><path d="M1 1 L4.5 4.5 L1 8" fill="none" stroke="#4d4d4d" stroke-width="1.3"/></svg>
<div class="ab" style="left:143px;top:403px;width:275px;height:1px;background:#d7d7d7"></div>
<div class="ab t" style="left:147px;top:407px;height:22px;line-height:22px">SpotBugs</div>
<svg class="ab" style="left:404px;top:413px" width="6" height="9" viewBox="0 0 6 9"><path d="M1 1 L4.5 4.5 L1 8" fill="none" stroke="#4d4d4d" stroke-width="1.3"/></svg>
<div class="ab t" style="left:147px;top:429px;height:22px;line-height:22px">Refresh</div>
<div class="ab t" style="right:326px;top:429px;height:22px;line-height:22px">F5</div>
<div class="ab" style="left:117px;top:431px;line-height:0"><svg width="20" height="20" viewBox="0 0 20 20"><path d="M8.5 8.5C8 6 9.5 4 11.5 2.5L12.5 5C14 5.2 15.5 6.5 15.8 9L14.8 11.8C14 9.5 12.5 8.5 11 8.7L11.3 10.5Z" fill="#f8d15c" stroke="#c08d16" stroke-width="0.9" stroke-linejoin="round"/><path d="M10 10.5C10.5 13 9 15 7 16.5L6 14C4.5 13.8 3 12.5 2.7 10L3.7 7.2C4.5 9.5 6 10.5 7.5 10.3L7.2 8.5Z" fill="#f8d15c" stroke="#c08d16" stroke-width="0.9" stroke-linejoin="round"/></svg></div>
<div class="ab t" style="left:147px;top:451px;height:22px;line-height:22px">Close Project</div>
<div class="ab t" style="left:147px;top:473px;height:22px;line-height:22px">Close Unrelated Project</div>
<div class="ab t" style="left:147px;top:495px;height:22px;line-height:22px">Assign Working Sets...</div>
<div class="ab" style="left:143px;top:520px;width:275px;height:1px;background:#d7d7d7"></div>
<div class="ab t" style="left:147px;top:524px;height:22px;line-height:22px">Coverage As</div>
<svg class="ab" style="left:404px;top:530px" width="6" height="9" viewBox="0 0 6 9"><path d="M1 1 L4.5 4.5 L1 8" fill="none" stroke="#4d4d4d" stroke-width="1.3"/></svg>
<div class="ab" style="left:117px;top:526px;line-height:0"><svg width="20" height="20" viewBox="0 0 20 20"><circle cx="6.5" cy="6.3" r="5.3" fill="#3f9a45" stroke="#2c7a34" stroke-width="0.8"/><path d="M5 3.6L9.2 6.3L5 9Z" fill="#fff"/><rect x="6.5" y="10.3" width="9.5" height="4.2" fill="#111"/><rect x="7.5" y="11.2" width="3.8" height="2.4" fill="#19c02a"/><rect x="11.3" y="11.2" width="3.8" height="2.4" fill="#e01515"/></svg></div>
<div class="ab t" style="left:147px;top:546px;height:22px;line-height:22px">Run As</div>
<svg class="ab" style="left:404px;top:552px" width="6" height="9" viewBox="0 0 6 9"><path d="M1 1 L4.5 4.5 L1 8" fill="none" stroke="#4d4d4d" stroke-width="1.3"/></svg>
<div class="ab" style="left:117px;top:548px;line-height:0"><svg width="20" height="20" viewBox="0 0 20 20"><circle cx="9" cy="9.1" r="6.6" fill="#3e9a46" stroke="#257a33" stroke-width="0.9"/><circle cx="8.5" cy="8.2" r="4.5" fill="#58b45c" opacity="0.6"/><path d="M7 5.3L12.7 9.1L7 12.9Z" fill="#fff"/></svg></div>
<div class="ab t" style="left:147px;top:568px;height:22px;line-height:22px">Debug As</div>
<svg class="ab" style="left:404px;top:574px" width="6" height="9" viewBox="0 0 6 9"><path d="M1 1 L4.5 4.5 L1 8" fill="none" stroke="#4d4d4d" stroke-width="1.3"/></svg>
<div class="ab" style="left:117px;top:570px;line-height:0"><svg width="20" height="20" viewBox="0 0 20 20"><path d="M4 3L6.5 6.5M8.5 2.5L8.5 5M2.5 8H5.5M13 15.5L10.8 12.5M16 11.5L12.5 10.5M14.5 6L11.5 7.5M4.5 12.5L7 10.5M8.5 16L8.5 13" stroke="#2a5a6a" stroke-width="1.1" fill="none"/><ellipse cx="9.8" cy="9.5" rx="3.2" ry="4.8" transform="rotate(-45 9.8 9.5)" fill="#a8c898" stroke="#2a6a7a" stroke-width="1"/><path d="M8 8L11.5 11.5" stroke="#d8ecd0" stroke-width="0.8"/><circle cx="6.3" cy="6" r="1.6" fill="#3a8a8a" stroke="#2a5a6a" stroke-width="0.6"/></svg></div>
<div class="ab t" style="left:147px;top:590px;height:22px;line-height:22px">Profile As</div>
<svg class="ab" style="left:404px;top:596px" width="6" height="9" viewBox="0 0 6 9"><path d="M1 1 L4.5 4.5 L1 8" fill="none" stroke="#4d4d4d" stroke-width="1.3"/></svg>
<div class="ab" style="left:117px;top:592px;line-height:0"><svg width="20" height="20" viewBox="0 0 20 20"><circle cx="6.9" cy="12.8" r="3.4" fill="#fff" stroke="#4a6ab8" stroke-width="1"/><path d="M6.9 11v2h1.3" fill="none" stroke="#4a6ab8" stroke-width="0.8"/><circle cx="6.5" cy="6.3" r="5.3" fill="#3f9a45" stroke="#2c7a34" stroke-width="0.8"/><path d="M5 3.6L9.2 6.3L5 9Z" fill="#fff"/><path d="M11.5 9.5H17M11.5 11.5H17M11.5 13.5H17M11.5 15.5H17" stroke="#5a6fb8" stroke-width="0.9"/></svg></div>
<div class="ab t" style="left:147px;top:612px;height:22px;line-height:22px">Restore from Local History...</div>
<div class="ab t" style="left:147px;top:634px;height:22px;line-height:22px">Java EE Tools</div>
<svg class="ab" style="left:404px;top:640px" width="6" height="9" viewBox="0 0 6 9"><path d="M1 1 L4.5 4.5 L1 8" fill="none" stroke="#4d4d4d" stroke-width="1.3"/></svg>
<div class="ab t" style="left:147px;top:656px;height:22px;line-height:22px">eGovFrame</div>
<svg class="ab" style="left:404px;top:662px" width="6" height="9" viewBox="0 0 6 9"><path d="M1 1 L4.5 4.5 L1 8" fill="none" stroke="#4d4d4d" stroke-width="1.3"/></svg>
<div class="ab t" style="left:147px;top:678px;height:22px;line-height:22px">PMD</div>
<svg class="ab" style="left:404px;top:684px" width="6" height="9" viewBox="0 0 6 9"><path d="M1 1 L4.5 4.5 L1 8" fill="none" stroke="#4d4d4d" stroke-width="1.3"/></svg>
<div class="ab" style="left:117px;top:680px;line-height:0"><svg width="20" height="20" viewBox="0 0 20 20"><g fill="#444"><circle cx="2.6" cy="6.6" r="0.75"/><circle cx="1.5" cy="9" r="0.75"/><circle cx="2.6" cy="11.4" r="0.75"/><circle cx="15.4" cy="6.6" r="0.75"/><circle cx="16.5" cy="9" r="0.75"/><circle cx="15.4" cy="11.4" r="0.75"/></g><path d="M3.8 12V7.3H6Q7 7.3 7 8.6Q7 9.8 6 9.8H4.2M8 7.5V9.5H9.5M9.5 7V11M11 7.3V11.3H12.5Q14 11.3 14 9.3Q14 7.3 12.5 7.3Z" fill="none" stroke="#22b05a" stroke-width="1.3"/></svg></div>
<div class="ab" style="left:115px;top:700px;width:303px;height:22px;background:#91c9f7"></div>
<div class="ab t" style="left:147px;top:700px;height:22px;line-height:22px">Maven</div>
<svg class="ab" style="left:404px;top:706px" width="6" height="9" viewBox="0 0 6 9"><path d="M1 1 L4.5 4.5 L1 8" fill="none" stroke="#4d4d4d" stroke-width="1.3"/></svg>
<div class="ab t" style="left:147px;top:722px;height:22px;line-height:22px">Team</div>
<svg class="ab" style="left:404px;top:728px" width="6" height="9" viewBox="0 0 6 9"><path d="M1 1 L4.5 4.5 L1 8" fill="none" stroke="#4d4d4d" stroke-width="1.3"/></svg>
<div class="ab t" style="left:147px;top:744px;height:22px;line-height:22px">Compare With</div>
<svg class="ab" style="left:404px;top:750px" width="6" height="9" viewBox="0 0 6 9"><path d="M1 1 L4.5 4.5 L1 8" fill="none" stroke="#4d4d4d" stroke-width="1.3"/></svg>
<div class="ab t" style="left:147px;top:766px;height:22px;line-height:22px">Configure</div>
<svg class="ab" style="left:404px;top:772px" width="6" height="9" viewBox="0 0 6 9"><path d="M1 1 L4.5 4.5 L1 8" fill="none" stroke="#4d4d4d" stroke-width="1.3"/></svg>
<div class="ab t" style="left:147px;top:788px;height:22px;line-height:22px">Spring</div>
<svg class="ab" style="left:404px;top:794px" width="6" height="9" viewBox="0 0 6 9"><path d="M1 1 L4.5 4.5 L1 8" fill="none" stroke="#4d4d4d" stroke-width="1.3"/></svg>
<div class="ab" style="left:117px;top:790px;line-height:0"><svg width="20" height="20" viewBox="0 0 20 20"><circle cx="9" cy="8.8" r="7.8" fill="#5fa52e"/><path d="M2.8 13.5C2.5 9.5 6 5.5 14.8 3.3C15.2 9 12.5 13.5 6.5 13.8C5 13.9 3.8 13.8 2.8 13.5Z" fill="#fff"/><path d="M4.5 12.5C7 11.5 10 9.5 12.5 6.5" fill="none" stroke="#5fa52e" stroke-width="1.1"/><path d="M1.5 15L3.5 13" stroke="#5fa52e" stroke-width="1.5"/></svg></div>
<div class="ab t" style="left:147px;top:810px;height:22px;line-height:22px">Validate</div>
<div class="ab" style="left:117px;top:812px;line-height:0"><svg width="20" height="20" viewBox="0 0 20 20"><rect x="3.5" y="3.5" width="11.5" height="11.3" fill="#e2f4fc" stroke="#7888a6" stroke-width="1.1"/><path d="M5.5 9L8 11.7L12.8 5.8" fill="none" stroke="#22406a" stroke-width="1.7"/></svg></div>
<div class="ab" style="left:143px;top:835px;width:275px;height:1px;background:#d7d7d7"></div>
<div class="ab t" style="left:147px;top:839px;height:22px;line-height:22px">Properties</div>
<div class="ab t" style="right:326px;top:839px;height:22px;line-height:22px">Alt+Enter</div>
<div class="ab" style="left:723px;top:702px;width:3px;height:252px;background:linear-gradient(to right,rgba(0,0,0,.48),rgba(0,0,0,.36) 50%,rgba(0,0,0,.1));-webkit-mask-image:linear-gradient(to bottom,transparent,#000 5px)"></div>
<div class="ab" style="left:420px;top:951px;width:302px;height:3px;background:linear-gradient(to bottom,rgba(0,0,0,.48),rgba(0,0,0,.36) 50%,rgba(0,0,0,.1));-webkit-mask-image:linear-gradient(to right,transparent,#000 5px)"></div>
<div class="ab" style="left:415px;top:697px;width:306px;height:252px;background:#f2f2f2;border:1px solid #c6c6c6"></div>
<div class="ab" style="left:416px;top:698px;width:304px;height:250px;border:1px solid #f8f8f8"></div>
<div class="ab" style="left:417px;top:699px;width:29px;height:250px;background:#f0f0f0"></div>
<div class="ab t" style="left:450px;top:700px;height:22px;line-height:22px">Add Dependency</div>
<div class="ab t" style="left:450px;top:722px;height:22px;line-height:22px">Add Plugin</div>
<div class="ab t" style="left:450px;top:744px;height:22px;line-height:22px">New Maven Module Project</div>
<div class="ab" style="left:420px;top:746px;line-height:0"><svg width="20" height="20" viewBox="0 0 20 20"><path d="M2.5 8H11V14H2.5Z" fill="#f6d98e" stroke="#c89a3a" stroke-width="0.8"/><path d="M2.3 16.5L6 11H17L13.3 16.5Z" fill="#a8d2f8" stroke="#2f4fb0" stroke-width="1" stroke-linejoin="round"/><path d="M2.3 16.5V8" stroke="#2f4fb0" stroke-width="1"/><path d="M2.2 8.2V3L6.5 6.8L10.8 3V8.2" fill="none" stroke="#1f5aa8" stroke-width="1.9" stroke-linejoin="miter"/><path d="M13.8 2.3L15 5L17.2 5.8L15 6.6L13.8 9.3L12.6 6.6L10.4 5.8L12.6 5Z" fill="#f0d070" stroke="#b08a2a" stroke-width="0.7"/></svg></div>
<div class="ab" style="left:446px;top:769px;width:274px;height:1px;background:#d7d7d7"></div>
<div class="ab t" style="left:450px;top:773px;height:22px;line-height:22px">Download Javadoc</div>
<div class="ab t" style="left:450px;top:795px;height:22px;line-height:22px">Download Sources</div>
<div class="ab t" style="left:450px;top:817px;height:22px;line-height:22px">Update Project...</div>
<div class="ab t" style="right:24px;top:817px;height:22px;line-height:22px">Alt+F5</div>
<div class="ab" style="left:420px;top:819px;line-height:0"><svg width="20" height="20" viewBox="0 0 20 20"><path d="M8 2L12 1.3L17 6.3L12.5 10L11 8.5L13 6.3L10.5 4Z" fill="#c8ecd8" stroke="#4a8aa8" stroke-width="0.8" stroke-linejoin="round"/><path d="M6 6.4L1.2 10.3L5.8 15L9.8 14.5L8.3 12.3L5.5 11.3L8 8.8Z" fill="#f6cc5a" stroke="#c08d16" stroke-width="0.8" stroke-linejoin="round"/><path d="M10.9 16.5V12.3L13.5 14.8L16.1 12.3V16.5" fill="none" stroke="#1f5aa8" stroke-width="1.5"/></svg></div>
<div class="ab" style="left:446px;top:842px;width:274px;height:1px;background:#d7d7d7"></div>
<div class="ab t" style="left:450px;top:846px;height:22px;line-height:22px">Select Maven Profiles...</div>
<div class="ab t" style="right:24px;top:846px;height:22px;line-height:22px">Ctrl+Alt+P</div>
<div class="ab" style="left:446px;top:871px;width:274px;height:1px;background:#d7d7d7"></div>
<div class="ab t" style="left:450px;top:875px;height:22px;line-height:22px">Disable Workspace Resolution</div>
<div class="ab" style="left:418px;top:897px;width:302px;height:22px;background:#91c9f7"></div>
<div class="ab t" style="left:450px;top:897px;height:22px;line-height:22px">Disable Maven Nature</div>
<div class="ab" style="left:446px;top:922px;width:274px;height:1px;background:#d7d7d7"></div>
<div class="ab t" style="left:450px;top:926px;height:22px;line-height:22px">Assign Working Sets...</div>
</body></html>
